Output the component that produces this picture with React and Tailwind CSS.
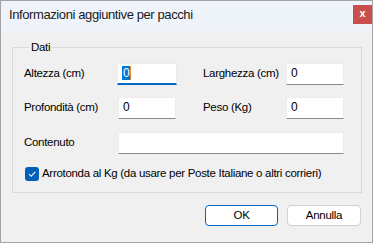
import React from "react";

const font = { fontFamily: '"Liberation Sans", Arial, sans-serif' };

function TextBox({ w, value, focused, className = "" }) {
  return (
    <div
      className={`h-[22px] bg-white border border-[#ececec] ${focused ? "border-b-2 border-b-[#0067c0]" : "border-b-[#8a8a8a]"} pl-[4px] pt-[2px] text-[12px] leading-[15px] text-black ${className}`}
      style={{ width: w }}
    >
      {focused ? (
        <span className="bg-[#0078d7] text-white px-[1px] border-r border-[#e08a2a]">{value}</span>
      ) : (
        value
      )}
    </div>
  );
}

export default function App() {
  return (
    <div className="w-[373px] h-[243px] bg-[#f0f0f0] border border-[#a3a3a3] flex flex-col whitespace-nowrap" style={font}>
      <div className="h-[30px] bg-[#eff3fa] flex items-center justify-between pl-[8px] pr-[0px] shrink-0">
        <span className="text-[13px] tracking-[-0.4px] text-[#1a1a1a] leading-none -mt-[3px]">Informazioni aggiuntive per pacchi</span>
        <div className="w-[19px] h-[19px] bg-[#c94f4f] flex items-center justify-center text-white text-[11px] font-bold leading-none -mt-[4px] pb-[2px]">
          x
        </div>
      </div>
      <div className="flex-1 flex flex-col px-[11px] text-[11.5px] tracking-[-0.3px]">
        <fieldset className="mt-[8px] h-[154px] border border-[#dadada] pl-[11px] pr-[17px] pt-[6px]">
          <legend className="text-black px-[1px] ml-[6px] leading-[16px]">Dati</legend>
          <div className="flex items-center h-[22px] text-black mt-[2px]">
            <span className="w-[93px]">Altezza (cm)</span>
            <TextBox w={60} value="0" focused />
            <span className="ml-[26px] w-[83px]">Larghezza (cm)</span>
            <TextBox w={58} value="0" />
          </div>
          <div className="flex items-center h-[22px] text-black mt-[12px]">
            <span className="w-[94px]">Profondità (cm)</span>
            <TextBox w={58} value="0" />
            <span className="ml-[27px] w-[83px]">Peso (Kg)</span>
            <TextBox w={58} value="0" />
          </div>
          <div className="flex items-center h-[22px] text-black mt-[13px]">
            <span className="w-[94px]">Contenuto</span>
            <TextBox w={226} value="" />
          </div>
          <div className="flex items-center text-black mt-[11px] ml-[1px]">
            <div className="w-[14px] h-[14px] rounded-[3px] bg-[#005fb8] flex items-center justify-center mr-[3px]">
              <svg width="10" height="10" viewBox="0 0 10 10">
                <path d="M2 5.2 L4.2 7.3 L8.2 2.8" stroke="white" strokeWidth="1.1" fill="none" />
              </svg>
            </div>
            <span>Arrotonda al Kg (da usare per Poste Italiane o altri corrieri)</span>
          </div>
        </fieldset>
        <div className="flex justify-end gap-[9px] mt-[12px] pr-[0px]">
          <button className="w-[73px] h-[21px] bg-white border border-[#0067c0] rounded-[4px] text-black leading-none">OK</button>
          <button className="w-[74px] h-[21px] bg-white border border-[#d0d0d0] rounded-[4px] text-black leading-none">Annulla</button>
        </div>
      </div>
    </div>
  );
}
